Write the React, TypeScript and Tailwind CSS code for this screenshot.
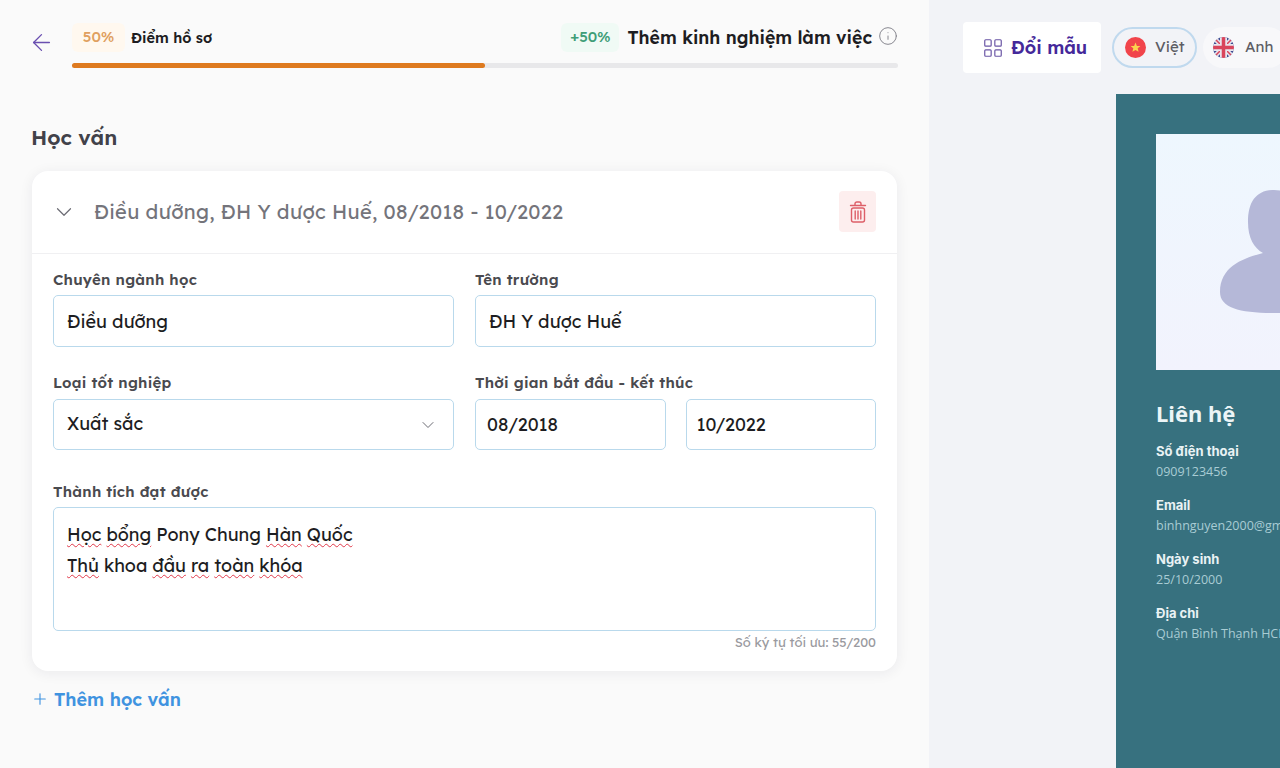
import React from "react";
import { ArrowLeft, ChevronDown, Info, LayoutGrid, Plus } from "lucide-react";

function Label({ children }: { children: React.ReactNode }) {
  return <div className="h-5 text-[15px] leading-[22px] font-semibold text-[#4a4a4f] tracking-[0.25px] whitespace-nowrap">{children}</div>;
}

function Box({ children, className = "" }: { children: React.ReactNode; className?: string }) {
  return (
    <div className={`flex items-center rounded-[5px] border-[1.5px] border-[#b9d9ec] bg-white text-[18px] font-normal text-[#1d1d22] ${className}`}>
      {children}
    </div>
  );
}

function W({ children }: { children: React.ReactNode }) {
  return <span className="underline decoration-wavy decoration-[#e0394a] decoration-1 underline-offset-2">{children}</span>;
}

function VietFlag() {
  return (
    <svg width="21" height="21" viewBox="0 0 21 21">
      <circle cx="10.5" cy="10.5" r="10.5" fill="#f1444b" />
      <polygon points="10.5,5.6 11.9,9 15.4,9.1 12.7,11.3 13.6,14.8 10.5,12.9 7.4,14.8 8.3,11.3 5.6,9.1 9.1,9" fill="#fbd24e" />
    </svg>
  );
}

function UkFlag() {
  return (
    <svg width="21" height="21" viewBox="0 0 21 21">
      <clipPath id="uk"><circle cx="10.5" cy="10.5" r="10.5" /></clipPath>
      <g clipPath="url(#uk)">
        <rect width="21" height="21" fill="#3f4f93" />
        <path d="M0 0L21 21M21 0L0 21" stroke="#e9e6ee" strokeWidth="4.5" />
        <path d="M0 0L21 21M21 0L0 21" stroke="#d9455c" strokeWidth="1.5" />
        <path d="M10.5 0V21M0 10.5H21" stroke="#e9e6ee" strokeWidth="7" />
        <path d="M10.5 0V21M0 10.5H21" stroke="#d9455c" strokeWidth="3.5" />
      </g>
    </svg>
  );
}

function TrashIcon() {
  return (
    <svg width="18" height="22" viewBox="0 0 18 22" fill="none" stroke="#dd5f68" strokeWidth="1.4" strokeLinecap="round">
      <path d="M6 4V2.8C6 1.8 6.8 1 7.8 1H10.2C11.2 1 12 1.8 12 2.8V4" />
      <path d="M1.5 4.5H16.5" />
      <rect x="2.5" y="7" width="13" height="14" rx="2" />
      <path d="M6.2 10V18M9 10V18M11.8 10V18" />
    </svg>
  );
}

function Contact({ title, value }: { title: string; value: string }) {
  return (
    <div className="h-[54px] font-['Inter',sans-serif]">
      <div className="h-[20px] text-[13px] leading-[20px] font-bold text-[#e9f2f4] whitespace-nowrap">{title}</div>
      <div className="h-[20px] font-['Open_Sans',sans-serif] text-[12.5px] leading-[22px] text-[#a9ccd4] whitespace-nowrap">{value}</div>
    </div>
  );
}

export default function App() {
  return (
    <div className="flex h-[768px] w-[1280px] overflow-hidden font-['Lexend','Lato','Noto_Sans',sans-serif]">
      {/* Left panel */}
      <div className="w-[929px] shrink-0 bg-[#fafafa] pl-[32px] pr-[31px]">
        <div className="flex h-[68px] items-start">
          <ArrowLeft className="mt-[29px] -ml-[4px] h-[27px] w-[27px] text-[#6a4fb0]" strokeWidth={1.2} />
          <div className="ml-[17px] flex-1 pt-[23px]">
            <div className="flex h-[29px] items-center">
              <div className="flex h-[29px] w-[53px] items-center justify-center rounded-[6px] bg-[#fff8ef] text-[15px] font-medium text-[#e0a05f]">50%</div>
              <div className="ml-[6px] text-[14.5px] font-semibold text-[#1d1d22] whitespace-nowrap">Điểm hồ sơ</div>
              <div className="ml-auto flex h-[29px] w-[58px] items-center justify-center rounded-[6px] bg-[#f0faf5] text-[15px] font-medium text-[#3f9e78]">+50%</div>
              <div className="ml-[8px] text-[17.7px] font-semibold text-[#1d1d22] whitespace-nowrap">Thêm kinh nghiệm làm việc</div>
              <Info className="ml-[6px] -mt-[3px] h-[20px] w-[20px] text-[#7d7d85]" strokeWidth={1.1} />
            </div>
            <div className="mt-[11px] h-[5px] w-[826px] rounded-full bg-[#e8e8ea]">
              <div className="h-[5px] w-[413px] rounded-full bg-[#de7a1f]" />
            </div>
          </div>
        </div>

        <h2 className="mt-[56px] -ml-[1px] h-[28px] text-[21px] leading-[27px] font-semibold text-[#414149]">Học vấn</h2>

        <div className="mt-[19px] h-[500px] w-[865px] rounded-[16px] bg-white shadow-[0_2px_14px_rgba(30,30,60,0.07)]">
          <div className="flex h-[83px] items-center border-b border-[#f0f0f2] pl-[19px] pr-[21px]">
            <ChevronDown className="h-[26px] w-[26px] text-[#6c6c74]" strokeWidth={1.1} />
            <div className="ml-[17px] text-[20px] font-normal tracking-[0.3px] text-[#74747b] whitespace-nowrap">Điều dưỡng, ĐH Y dược Huế, 08/2018 - 10/2022</div>
            <div className="ml-auto -mt-[1px] flex h-[41px] w-[37px] items-center justify-center rounded-[4px] bg-[#fdeeee]">
              <TrashIcon />
            </div>
          </div>

          <div className="px-[21px] pt-[15px]">
            <div className="grid grid-cols-2 gap-x-[21px]">
              <div>
                <Label>Chuyên ngành học</Label>
                <Box className="mt-[6px] h-[52px] pl-[13px]">Điều dưỡng</Box>
              </div>
              <div>
                <Label>Tên trường</Label>
                <Box className="mt-[6px] h-[52px] pl-[13px]">ĐH Y dược Huế</Box>
              </div>
            </div>

            <div className="mt-[25px] grid grid-cols-2 gap-x-[21px]">
              <div>
                <Label>Loại tốt nghiệp</Label>
                <Box className="mt-[7px] h-[51px] justify-between pl-[13px] pr-[15px]">
                  <span className="-mt-[3px]">Xuất sắc</span>
                  <ChevronDown className="h-[20px] w-[20px] text-[#6c6c74]" strokeWidth={1.2} />
                </Box>
              </div>
              <div>
                <Label>Thời gian bắt đầu - kết thúc</Label>
                <div className="mt-[7px] grid grid-cols-2 gap-x-[20px]">
                  <Box className="h-[51px] pl-[11px]">08/2018</Box>
                  <Box className="h-[51px] pl-[10px]">10/2022</Box>
                </div>
              </div>
            </div>

            <div className="mt-[31px]">
              <Label>Thành tích đạt được</Label>
              <div className="mt-[6px] h-[124px] rounded-[5px] border-[1.5px] border-[#b9d9ec] bg-white pl-[13px] pt-[11px] text-[18px] font-normal leading-[31px] text-[#1d1d22]">
                <div><W>Học</W> <W>bổng</W> Pony Chung <W>Hàn</W> <W>Quốc</W></div>
                <div><W>Thủ</W> khoa <W>đầu</W> <W>ra</W> <W>toàn</W> <W>khóa</W></div>
              </div>
              <div className="mt-[1px] text-right text-[13px] leading-[20px] font-normal text-[#9a9aa0]">Số ký tự tối ưu: 55/200</div>
            </div>
          </div>
        </div>

        <div className="mt-[17px] flex h-[22px] items-center text-[#3f93e0]">
          <Plus className="-ml-[1px] h-[18px] w-[18px]" strokeWidth={1.5} />
          <span className="ml-[5px] text-[18px] font-semibold whitespace-nowrap">Thêm học vấn</span>
        </div>
      </div>

      {/* Right panel */}
      <div className="flex-1 overflow-hidden bg-[#f2f3f7]">
        <div className="flex h-[94px] items-start pl-[34px] pt-[22px]">
          <div className="flex h-[51px] w-[138px] shrink-0 items-center pl-[19px] rounded-[4px] bg-white">
            <LayoutGrid className="h-[22px] w-[22px] text-[#6a55a5]" strokeWidth={1.3} />
            <span className="ml-[7px] text-[18px] font-semibold text-[#45289a] whitespace-nowrap">Đổi mẫu</span>
          </div>
          <div className="ml-[11px] mt-[5px] flex h-[41px] w-[85px] shrink-0 items-center rounded-full border-2 border-[#c0d9ee] pl-[11px]">
            <VietFlag />
            <span className="ml-[9px] text-[15px] font-normal text-[#5d5d64]">Việt</span>
          </div>
          <div className="ml-[6px] mt-[5px] flex h-[41px] w-[85px] shrink-0 items-center rounded-full bg-[#f8f8fa] pl-[10px]">
            <UkFlag />
            <span className="ml-[11px] text-[15px] font-normal text-[#5d5d64]">Anh</span>
          </div>
        </div>

        <div className="ml-[187px] h-[674px] w-[300px] bg-[#37717f] pl-[40px] pt-[40px]">
          <div className="h-[236px] w-[236px] bg-linear-to-b from-[#eef7fe] to-[#f2f3fd]">
            <svg width="236" height="236" viewBox="0 0 236 236">
              <path d="M118 56C100 56 92 68 92 88C92 104 98 114 107 119C88 124 64 132 64 158C64 174 84 179 118 179C152 179 172 174 172 158C172 132 148 124 129 119C138 114 144 104 144 88C144 68 136 56 118 56Z" fill="#b5b8d8" />
            </svg>
          </div>
          <div className="mt-[28px] h-[30px] font-['Noto_Sans',sans-serif] text-[22px] leading-[30px] font-bold text-[#ecf5f7]">Liên hệ</div>
          <div className="mt-[13px]">
            <Contact title="Số điện thoại" value="0909123456" />
            <Contact title="Email" value="binhnguyen2000@gmail.com" />
            <Contact title="Ngày sinh" value="25/10/2000" />
            <Contact title="Địa chỉ" value="Quận Bình Thạnh HCM" />
          </div>
        </div>
      </div>
    </div>
  );
}
